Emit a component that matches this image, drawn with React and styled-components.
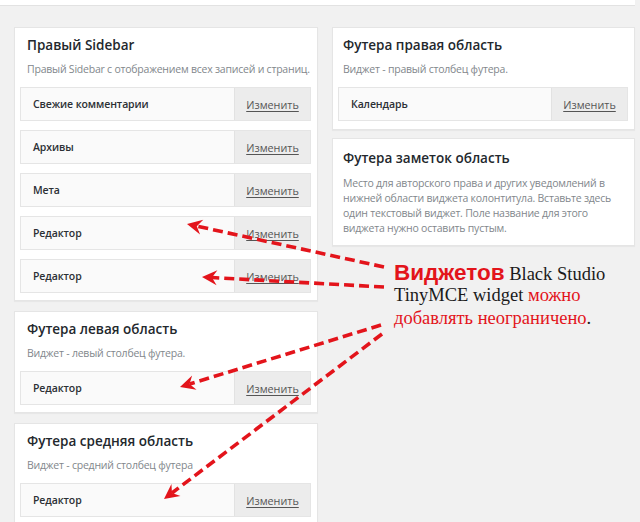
import React from "react";
import styled, { createGlobalStyle } from "styled-components";

const Global = createGlobalStyle`
  html, body { margin: 0; padding: 0; background: #f1f1f1; }
  body { font-family: "Open Sans", "Noto Sans", sans-serif; }
`;

const Page = styled.div`
  position: relative;
  width: 640px;
  height: 522px;
  overflow: hidden;
  background: #f1f1f1;
`;

const TopStrip = styled.div`
  height: 5px;
  width: 635px;
  background: #fff;
  border-bottom: 1px solid #e2e2e2;
`;

const Columns = styled.div`
  display: grid;
  grid-template-columns: 304px 303px;
  column-gap: 14px;
  padding: 21px 0 0 14px;
  align-items: start;
`;

const Column = styled.div`
  display: flex;
  flex-direction: column;
  gap: ${(p) => p.$gap}px;
`;

const Panel = styled.section`
  background: #fff;
  border: 1px solid #e5e5e5;
  box-shadow: 0 1px 1px rgba(0, 0, 0, 0.04);
  padding: ${(p) => p.$pt}px 6px ${(p) => p.$pb}px 5px;
`;

const Title = styled.h3`
  margin: 0 0 0 ${(p) => p.$indent}px;
  font-size: 13.5px;
  line-height: 20px;
  font-weight: 600;
  color: #23282d;
`;

const Desc = styled.p`
  margin: ${(p) => p.$mt}px 0 0 ${(p) => p.$indent}px;
  font-size: 10.5px;
  letter-spacing: -0.22px;
  line-height: ${(p) => p.$lh}px;
  color: #82878c;
`;

const Rows = styled.div`
  display: flex;
  flex-direction: column;
  gap: 9px;
  margin-top: 10px;
`;

const Row = styled.div`
  display: flex;
  height: 32px;
  background: #fafafa;
  border: 1px solid #e5e5e5;
`;

const RowName = styled.div`
  flex: 1;
  display: flex;
  align-items: center;
  padding-left: 12px;
  font-size: 10.5px;
  letter-spacing: -0.1px;
  font-weight: 600;
  color: #2c3035;
`;

const EditBox = styled.div`
  width: 75px;
  display: flex;
  align-items: center;
  justify-content: center;
  background: #ececec;
  border-left: 1px solid #e2e2e2;
`;

const EditLink = styled.a`
  font-size: 10.8px;
  color: #555;
  text-decoration: underline;
  text-underline-offset: 2px;
`;

const Overlay = styled.svg`
  position: absolute;
  left: 0;
  top: 0;
  width: 640px;
  height: 522px;
  pointer-events: none;
`;

const Note = styled.div`
  position: absolute;
  left: 394px;
  top: 261px;
  width: 240px;
  font-family: "Liberation Serif", "DejaVu Serif", serif;
  font-size: 18.5px;
  color: #1a1a1a;
`;

const NoteLine = styled.div`
  height: 23px;
  line-height: 23px;
  white-space: nowrap;
`;

const NoteStrong = styled.span`
  font-family: "Liberation Sans", Arial, sans-serif;
  font-weight: 700;
  font-size: 22.5px;
  color: #e3141b;
`;

const Red = styled.span`
  color: #e3141b;
`;

function Widget({ name }) {
  return (
    <Row>
      <RowName>{name}</RowName>
      <EditBox>
        <EditLink>Изменить</EditLink>
      </EditBox>
    </Row>
  );
}

function Area({ title, desc, widgets, side, lh = 16 }) {
  const right = side === "right";
  const hasRows = widgets && widgets.length > 0;
  return (
    <Panel $pt={right && !hasRows ? 9 : 7} $pb={right ? (hasRows ? 8 : 9) : 7}>
      <Title $indent={right ? 5 : 7}>{title}</Title>
      <Desc $indent={right ? 5 : 7} $lh={lh} $mt={right && !hasRows ? 8 : 6}>
        {desc}
      </Desc>
      {hasRows && (
        <Rows>
          {widgets.map((w, i) => (
            <Widget key={i} name={w} />
          ))}
        </Rows>
      )}
    </Panel>
  );
}

function Arrow({ x1, y1, x2, y2 }) {
  const dx = x2 - x1;
  const dy = y2 - y1;
  const len = Math.hypot(dx, dy);
  const ux = dx / len;
  const uy = dy / len;
  const headLen = 15;
  const bx = x2 - ux * headLen;
  const by = y2 - uy * headLen;
  const px = -uy;
  const py = ux;
  const w = 7.5;
  const nx = x2 - ux * (headLen - 5);
  const ny = y2 - uy * (headLen - 5);
  const head = `M ${x2} ${y2} L ${bx + px * w} ${by + py * w} L ${nx} ${ny} L ${bx - px * w} ${by - py * w} Z`;
  return (
    <g>
      <line
        x1={x1}
        y1={y1}
        x2={nx}
        y2={ny}
        stroke="#e3141b"
        strokeWidth="3.6"
        strokeDasharray="10 5"
      />
      <path d={head} fill="#e3141b" />
    </g>
  );
}

export default function App() {
  return (
    <Page>
      <Global />
      <TopStrip />
      <Columns>
        <Column $gap={10}>
          <Area
            title="Правый Sidebar"
            desc="Правый Sidebar с отображением всех записей и страниц."
            widgets={["Свежие комментарии", "Архивы", "Мета", "Редактор", "Редактор"]}
          />
          <Area
            title="Футера левая область"
            desc="Виджет - левый столбец футера."
            widgets={["Редактор"]}
          />
          <Area
            title="Футера средняя область"
            desc="Виджет - средний столбец футера"
            widgets={["Редактор"]}
          />
        </Column>
        <Column $gap={8}>
          <Area
            side="right"
            title="Футера правая область"
            desc="Виджет - правый столбец футера."
            widgets={["Календарь"]}
          />
          <Area
            side="right"
            lh={15}
            title="Футера заметок область"
            desc="Место для авторского права и других уведомлений в нижней области виджета колонтитула. Вставьте здесь один текстовый виджет. Поле название для этого виджета нужно оставить пустым."
          />
        </Column>
      </Columns>
      <Overlay viewBox="0 0 640 522">
        <Arrow x1={384} y1={267} x2={187} y2={224} />
        <Arrow x1={384} y1={287} x2={202} y2={277} />
        <Arrow x1={381} y1={325} x2={180} y2={387} />
        <Arrow x1={382} y1={334} x2={164} y2={499} />
      </Overlay>
      <Note>
        <NoteLine>
          <NoteStrong>Виджетов</NoteStrong> Black Studio
        </NoteLine>
        <NoteLine>
          TinyMCE widget <Red>можно</Red>
        </NoteLine>
        <NoteLine>
          <Red>добавлять неограничено</Red>.
        </NoteLine>
      </Note>
    </Page>
  );
}
